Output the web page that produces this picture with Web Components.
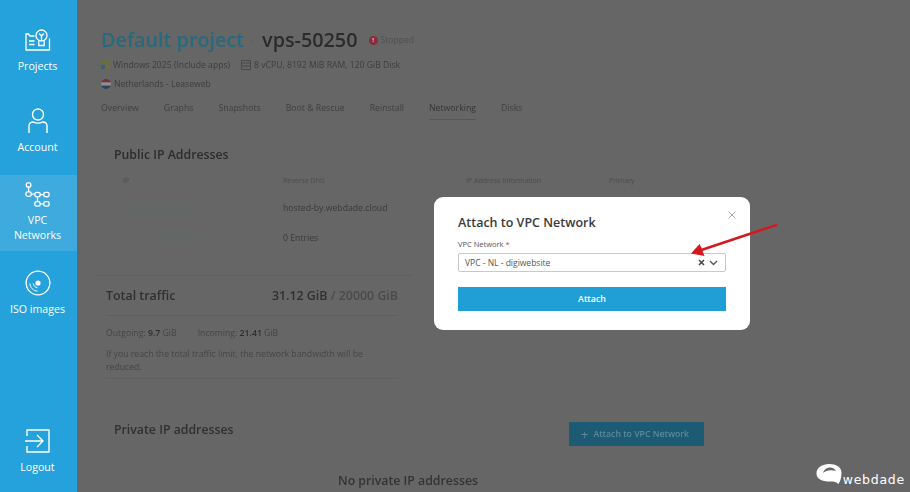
<!DOCTYPE html>
<html>
<head>
<meta charset="utf-8">
<title>vps-50250</title>
<style>
    html, body { margin: 0; height: 100%; }
    body { width: 910px; height: 492px; overflow: hidden; position: relative; background: #666; font-family: "Open Sans", sans-serif; display: flex; }
</style>
</head>
<body>
<side-nav>
    <nav-item label="Projects" style="--h:75px;--pad:9px;--gap:8px">
        <svg width="26" height="22" viewBox="0 0 26 22" fill="none" stroke="#fff" stroke-width="1.300"><path d="M9.500 7H5L3.500 5H1V21H24.500V9.500M4 12H9.500M4 15.500H9.500"/><circle cx="16.500" cy="6.500" r="5.500"/><path d="M13.800 11V16.500H19.200V11M14.200 4.500L16.500 7L18.800 4.500M16.500 7V11"/></svg>
    </nav-item>
    <nav-item label="Account" style="--h:80px;--pad:13px;--gap:6px">
        <svg width="20" height="26" viewBox="0 0 20 26" fill="none" stroke="#fff" stroke-width="1.400"><circle cx="10" cy="6.500" r="5.500"/><path d="M1 25V18C1 15.500 3 14 5.500 14C7.500 15.500 12.500 15.500 14.500 14C17 14 19 15.500 19 18V25"/></svg>
    </nav-item>
    <nav-item label="VPC Networks" active style="--h:76px;--pad:7px;--gap:5px">
        <svg width="25" height="26" viewBox="0 0 28 29" fill="none" stroke="#fff" stroke-width="1.500"><rect x="1.500" y="1" width="5" height="4.500" rx="1.500"/><rect x="1" y="11" width="6" height="5" rx="2"/><rect x="11" y="11.500" width="6" height="5" rx="2"/><rect x="21" y="11.500" width="6" height="5" rx="2"/><rect x="11" y="22" width="6" height="5" rx="2"/><rect x="21" y="22" width="6" height="5" rx="2"/><path d="M4 5.500V11M7 13.500H11M17 14H21M14 16.500V22M17 24.500H21"/></svg>
    </nav-item>
    <nav-item label="ISO images" style="--h:79px;--pad:19px;--gap:6px">
        <svg width="26" height="26" viewBox="0 0 27 27" fill="none" stroke="#fff" stroke-width="1.400"><circle cx="13.500" cy="13.500" r="12.300"/><circle cx="13.500" cy="13.500" r="2" fill="#fff"/><path d="M5 14C5.500 18.500 8.500 21.500 13 22M8.500 14C9 16.500 10.500 18 13 18.500" stroke-width="1"/></svg>
    </nav-item>
    <nav-item slot="bottom" label="Logout" style="--h:72px;--pad:9px;--gap:7px">
        <svg width="25" height="24" viewBox="0 0 25 24" fill="none" stroke="#fff" stroke-width="1.400"><path d="M2 7V1H24V23H2V17M0 12H17M12 6L18 12L12 18"/></svg>
    </nav-item>
</side-nav>

<main-pane>
    <server-header></server-header>
    <ip-table></ip-table>
    <traffic-card></traffic-card>
    <private-ips></private-ips>
</main-pane>

<attach-modal></attach-modal>
<brand-mark></brand-mark>

<script>
class SideNav extends HTMLElement {
    constructor() {
        super();
        this.attachShadow({mode: "open"}).innerHTML = `
        <style>
            :host { display: flex; flex-direction: column; justify-content: space-between; flex: none; box-sizing: border-box; width: 77px; height: 492px; padding-top: 20px; background: #25a2db; }
            div { display: flex; flex-direction: column; }
        </style>
        <div><slot></slot></div>
        <slot name="bottom"></slot>`;
    }
}
customElements.define("side-nav", SideNav);

class NavItem extends HTMLElement {
    constructor() {
        super();
        this.attachShadow({mode: "open"}).innerHTML = `
        <style>
            :host { display: flex; flex-direction: column; align-items: center; box-sizing: border-box; height: var(--h); padding-top: var(--pad); padding-right: 2px; gap: var(--gap); color: #fff; font-size: 10.600px; line-height: 15px; text-align: center; }
            :host([active]) { background: #3eaade; }
            span { width: 60px; }
            ::slotted(svg) { display: block; flex: none; }
        </style>
        <slot></slot>
        <span></span>`;
        this.shadowRoot.querySelector("span").textContent = this.getAttribute("label");
    }
}
customElements.define("nav-item", NavItem);

class MainPane extends HTMLElement {
    constructor() {
        super();
        this.attachShadow({mode: "open"}).innerHTML = `
        <style>
            :host { display: flex; flex-direction: column; flex: 1; min-width: 0; height: 492px; overflow: hidden; color: #2e2e2e; filter: blur(.35px); }
        </style>
        <slot></slot>`;
    }
}
customElements.define("main-pane", MainPane);

class ServerHeader extends HTMLElement {
    constructor() {
        super();
        this.attachShadow({mode: "open"}).innerHTML = `
        <style>
            :host { display: block; padding: 26px 0 0 24px; }
            h1 { display: flex; align-items: center; margin: 0; height: 28px; font-size: 19.800px; font-weight: 600; line-height: 28px; color: #2b2b2b; white-space: nowrap; }
            .project { color: #266a80; }
            .sep { width: 4px; margin: 0 7px; font-size: 10px; color: #5a5a5a; }
            .state { display: flex; align-items: center; gap: 3px; margin-left: 11px; font-size: 8.600px; font-weight: 400; color: #505050; }
            .dot { width: 9px; height: 9px; border-radius: 50%; background: #8a2c3d; color: #ddd; font-size: 6px; line-height: 9px; text-align: center; font-weight: 700; }
            .meta { display: flex; align-items: center; gap: 3px; height: 19px; font-size: 8.650px; color: #3d3d3d; white-space: nowrap; }
            .meta.first { margin-top: 1px; }
            .spec { margin-left: 8px; }
            nav { display: flex; gap: 25px; margin-top: 5px; font-size: 8.720px; color: #3f3f3f; }
            nav span { padding: 4px 0 5px; border-bottom: 1px solid transparent; }
            nav .on { border-color: #4d5a5e; color: #353535; }
        </style>
        <h1><span class="project">Default project</span><span class="sep">·</span><span>vps-50250</span>
            <span class="state"><span class="dot">!</span>Stopped</span></h1>
        <div class="meta first">
            <svg width="9" height="9" viewBox="0 0 9 9"><rect width="4" height="4" fill="#6c6b3a"/><rect x="5" width="4" height="4" fill="#66703c"/><rect y="5" width="4" height="4" fill="#3b6272"/><rect x="5" y="5" width="4" height="4" fill="#7a6a36"/></svg>
            <span>Windows 2025 (Include apps)</span>
            <svg class="spec" width="10" height="10" viewBox="0 0 10 10" fill="none" stroke="#444" stroke-width=".8"><rect x=".5" y=".5" width="9" height="9"/><path d="M.5 3H9.500M.5 6H9.500"/></svg>
            <span>8 vCPU, 8192 MiB RAM, 120 GiB Disk</span>
        </div>
        <div class="meta">
            <svg width="10" height="10" viewBox="0 0 10 10"><clipPath id="c"><circle cx="5" cy="5" r="5"/></clipPath><g clip-path="url(#c)"><rect width="10" height="3.400" fill="#7c2f3a"/><rect y="3.400" width="10" height="3.300" fill="#8f8f8f"/><rect y="6.700" width="10" height="3.300" fill="#2c4560"/></g></svg>
            <span>Netherlands - Leaseweb</span>
        </div>
        <nav><span>Overview</span><span>Graphs</span><span>Snapshots</span><span>Boot &amp; Rescue</span><span>Reinstall</span><span class="on">Networking</span><span>Disks</span></nav>`;
    }
}
customElements.define("server-header", ServerHeader);

class IpTable extends HTMLElement {
    constructor() {
        super();
        this.attachShadow({mode: "open"}).innerHTML = `
        <style>
            :host { display: block; margin: 26px 0 0 37px; }
            h2 { margin: 0; font-size: 12.300px; font-weight: 600; line-height: 18px; color: #2c2c2c; }
            .grid { display: grid; grid-template-columns: 160px 183px 143px 100px; margin: 7px 0 0 9px; align-items: center; }
            .head { font-size: 7px; color: #4c4c4c; height: 22px; line-height: 20px; }
            .cell { font-size: 8.700px; color: #3a3a3a; height: 30px; line-height: 30px; }
            .mask { width: 72px; height: 7px; background: #646768; filter: blur(1.500px); }
            .mask.short { margin-left: 30px; width: 50px; }
        </style>
        <h2>Public IP Addresses</h2>
        <div class="grid">
            <span class="head">IP</span><span class="head">Reverse DNS</span><span class="head">IP Address Information</span><span class="head">Primary</span>
            <div class="mask"></div><span class="cell">hosted-by.webdade.cloud</span><span></span><span></span>
            <div class="mask short"></div><span class="cell">0 Entries</span><span></span><span></span>
        </div>`;
    }
}
customElements.define("ip-table", IpTable);

class TrafficCard extends HTMLElement {
    constructor() {
        super();
        this.attachShadow({mode: "open"}).innerHTML = `
        <style>
            :host { display: block; box-sizing: border-box; width: 319px; margin: 22px 0 0 17px; padding: 0 0 0 12px; border-top: 1px solid #606060; }
            .total { display: flex; justify-content: space-between; align-items: center; width: 292px; height: 39px; border-bottom: 1px solid #5f5f5f; font-size: 12.400px; font-weight: 600; color: #303030; }
            .total i { font-style: normal; color: #4a4a4a; }
            .split { display: flex; gap: 21px; margin-top: 11px; font-size: 8.700px; line-height: 12px; color: #454545; }
            b { font-weight: 600; color: #2e2e2e; }
            p { margin: 9px 0 0; width: 292px; font-size: 8.700px; line-height: 13px; color: #454545; padding-bottom: 4px; border-bottom: 1px solid #5f5f5f; }
        </style>
        <div class="total"><span>Total traffic</span><span>31.12 GiB <i>/ 20000 GiB</i></span></div>
        <div class="split"><span>Outgoing: <b>9.7</b> GiB</span><span>Incoming: <b>21.41</b> GiB</span></div>
        <p>If you reach the total traffic limit, the network bandwidth will be reduced.</p>`;
    }
}
customElements.define("traffic-card", TrafficCard);

class PrivateIps extends HTMLElement {
    constructor() {
        super();
        this.attachShadow({mode: "open"}).innerHTML = `
        <style>
            :host { display: block; margin: 44px 0 0 37px; width: 590px; }
            .top { display: flex; justify-content: space-between; align-items: flex-start; }
            h2 { margin: -1px 0 0; font-size: 12.300px; font-weight: 600; line-height: 16px; color: #303030; }
            button { display: flex; align-items: center; gap: 5px; width: 135px; height: 24px; margin-top: -1px; padding: 0 0 0 12px; border: 0; background: #1d5a73; color: #5c8a9c; font: 600 8.700px "Open Sans", sans-serif; white-space: nowrap; }
            .plus { font-size: 13px; font-weight: 400; line-height: 13px; }
            p { margin: 27px 0 0; font-size: 12.300px; font-weight: 600; line-height: 16px; color: #333; padding-left: 224px; white-space: nowrap; }
        </style>
        <div class="top"><h2>Private IP addresses</h2><button><span class="plus">+</span>Attach to VPC Network</button></div>
        <p>No private IP addresses</p>`;
    }
}
customElements.define("private-ips", PrivateIps);

class AttachModal extends HTMLElement {
    constructor() {
        super();
        this.attachShadow({mode: "open"}).innerHTML = `
        <style>
            :host { position: absolute; left: 434px; top: 197px; box-sizing: border-box; width: 316px; height: 133px; padding: 17px 24px 0; background: #fff; border-radius: 9px; color: #333; }
            h3 { margin: 0; font-size: 12.500px; font-weight: 600; line-height: 18px; color: #3a3a3a; }
            .close { position: absolute; top: 14px; right: 14px; display: block; }
            label { display: block; margin-top: 6px; font-size: 7.500px; line-height: 12px; color: #555; }
            label i { font-style: normal; color: #d8395a; }
            .select { display: flex; align-items: center; box-sizing: border-box; height: 19px; margin-top: 3px; padding: 0 7px 0 6px; border: 1px solid #c9c9c9; border-radius: 2px; font-size: 8.500px; color: #555; }
            .select span { flex: 1; }
            .select svg { display: block; margin-left: 4px; }
            button { display: block; width: 100%; height: 24px; margin-top: 15px; border: 0; padding: 0; background: #1f9fd6; color: #fff; font: 600 8.800px "Open Sans", sans-serif; }
            .arrow { position: absolute; left: 257px; top: 26px; }
        </style>
        <h3>Attach to VPC Network</h3>
        <svg class="close" width="8" height="8" viewBox="0 0 8 8" stroke="#a8a8a8" stroke-width="1" fill="none"><path d="M.5.5L7.500 7.500M7.500.5L.5 7.500"/></svg>
        <label>VPC Network <i>*</i></label>
        <div class="select">
            <span>VPC - NL - digiwebsite</span>
            <svg width="7" height="7" viewBox="0 0 7 7" stroke="#444" stroke-width="1.500" fill="none"><path d="M1 1L6 6M6 1L1 6"/></svg>
            <svg width="9" height="6" viewBox="0 0 9 6" stroke="#555" stroke-width="1.300" fill="none"><path d="M1 1L4.500 4.500L8 1"/></svg>
        </div>
        <button>Attach</button>
        <svg class="arrow" width="90" height="36" viewBox="0 0 90 36" fill="#d5181f"><path d="M86 .4L86.800 2.800L11.500 28L13.500 33L0 30.500L8.500 21L10.800 25.600Z"/></svg>`;
    }
}
customElements.define("attach-modal", AttachModal);

class BrandMark extends HTMLElement {
    constructor() {
        super();
        this.attachShadow({mode: "open"}).innerHTML = `
        <style>
            :host { position: absolute; right: 5px; bottom: 8px; display: flex; align-items: flex-end; gap: 1px; color: #fff; }
            svg { display: block; }
            span { font: 400 12.500px/13px "DejaVu Sans", sans-serif; letter-spacing: .75px; margin-bottom: -2px; }
        </style>
        <svg width="26" height="20" viewBox="0 0 26 20"><path fill="#fff" fill-rule="evenodd" d="M13 0C20 0 25.500 3 25.500 9C25.500 13 24.500 17 22.500 20C20.500 18 18 17.500 14 17.500C6 17.500 .5 15 .5 9.500C.5 3.500 6.500 0 13 0ZM13.500 3.500C10.500 3.700 8 5.500 7 9C9.500 7 12 6.200 15.500 6.300C17.500 6.400 19 6.800 20 7.300C19 4.800 16.500 3.300 13.500 3.500Z"/></svg>
        <span>webdade</span>`;
    }
}
customElements.define("brand-mark", BrandMark);
</script>
</body>
</html>
